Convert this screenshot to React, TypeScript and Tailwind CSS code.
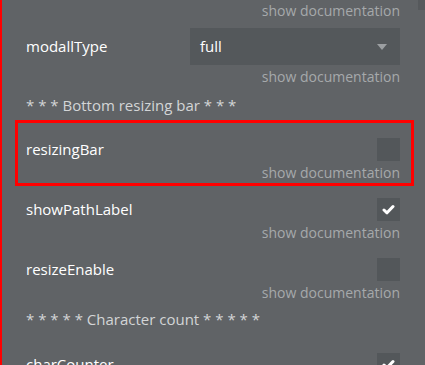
import React from "react";

const Doc = () => (
  <div className="flex justify-end h-[22px] items-center text-[14px] text-[#a6a9ab]">show documentation</div>
);

const Check = ({ checked }: { checked?: boolean }) => (
  <div className="w-[23px] h-[23px] bg-[#53575a] flex items-center justify-center">
    {checked && (
      <svg width="13" height="11" viewBox="0 0 13 11">
        <path d="M2 6 L5 8.8 L11 2.5" fill="none" stroke="#ffffff" strokeWidth="3" strokeLinecap="round" strokeLinejoin="round" />
      </svg>
    )}
  </div>
);

const BoolRow = ({ label, checked, boxed }: { label: string; checked?: boolean; boxed?: boolean }) => (
  <div className={boxed ? "pt-[15px] ring-[3px] ring-[#ff0000] ml-[-8px] pl-[8px] mr-[-11px] pr-[11px]" : "pt-[15px]"}>
    <div className="flex items-center justify-between h-[23px]">
      <span className="text-white text-[15px]">{label}</span>
      <Check checked={checked} />
    </div>
    <Doc />
  </div>
);

export default function App() {
  return (
    <div
      className="relative w-[425px] h-[365px] overflow-hidden bg-[#606366] border-l-2 border-[#ff0000] pl-[24px] pr-[25px]"
      style={{ fontFamily: '"Open Sans", sans-serif' }}
    >
      <div className="absolute right-0 top-0 w-[7px] h-[10px] bg-[#56595c]" />
      <div className="flex justify-end h-[20px] items-center text-[14px] text-[#a6a9ab]">show documentation</div>
      <div className="pt-[8px]">
        <div className="flex items-center justify-between h-[37px]">
          <span className="text-white text-[15px]">modallType</span>
          <div className="w-[210px] h-[37px] bg-[#54585b] flex items-center justify-between pl-[10px] pr-[13px]">
            <span className="text-white text-[15px]">full</span>
            <svg width="10" height="6" viewBox="0 0 10 6">
              <path d="M0 0 L10 0 L5 6 Z" fill="#9c9fa2" />
            </svg>
          </div>
        </div>
        <Doc />
      </div>
      <div className="pt-[8px] pb-[8px] h-[36px] flex items-center text-[15px] text-[#d3d5d6]">* * * Bottom resizing bar * * *</div>
      <BoolRow label="resizingBar" boxed />
      <BoolRow label="showPathLabel" checked />
      <BoolRow label="resizeEnable" />
      <div className="h-[35px] pb-[2px] flex items-center text-[15px] text-[#d3d5d6]">* * * * * Character count * * * * *</div>
      <BoolRow label="charCounter" checked />
    </div>
  );
}
